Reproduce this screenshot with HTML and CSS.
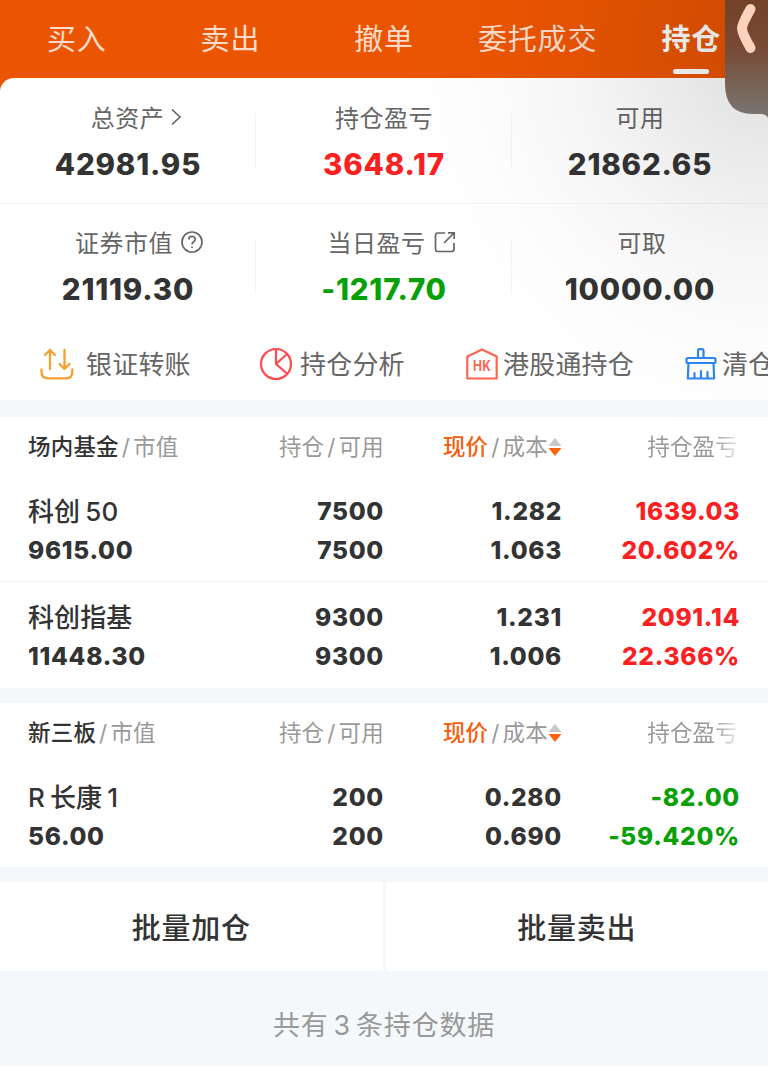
FILE: index.html
```
<!DOCTYPE html>
<html lang="zh-CN">
<head>
    <meta charset="UTF-8">
    <meta name="viewport" content="width=device-width, initial-scale=1.0">
    <title>持仓</title>
    <link rel="stylesheet" href="styles.css">
</head>
<body>
    <div class="page">
        <nav class="tabs">
            <a class="tab">买入</a>
            <a class="tab">卖出</a>
            <a class="tab">撤单</a>
            <a class="tab">委托成交</a>
            <a class="tab active">持仓</a>
        </nav>

        <div class="account">
            <div class="summary">
                <div class="stat">
                    <div class="label label-assets">总资产<svg class="arrow" width="12" height="18" viewBox="0 0 12 18"><path d="M2 1.500 L10 9 L2 16.500"/></svg></div>
                    <div class="value">42981.95</div>
                </div>
                <div class="stat">
                    <div class="label">持仓盈亏</div>
                    <div class="value up">3648.17</div>
                </div>
                <div class="stat">
                    <div class="label">可用</div>
                    <div class="value">21862.65</div>
                </div>
            </div>
            <div class="summary">
                <div class="stat">
                    <div class="label label-market">证券市值<svg width="22" height="22" viewBox="0 0 22 22"><circle cx="11" cy="11" r="10"/><path d="M7.800 8.600 C7.800 4.400 14.300 4.400 14.300 8.300 C14.300 10.800 11 10.800 11 13.400"/><path d="M11 15.400 V17"/></svg></div>
                    <div class="value">21119.30</div>
                </div>
                <div class="stat">
                    <div class="label label-today">当日盈亏<svg width="22" height="22" viewBox="0 0 22 22"><path d="M11 2 H4 Q1.500 2 1.500 4.500 V18 Q1.500 20.500 4 20.500 H17.500 Q20 20.500 20 18 V12"/><path d="M10 12 L20 2 M14 1.800 H20.200 V8"/></svg></div>
                    <div class="value down">-1217.70</div>
                </div>
                <div class="stat">
                    <div class="label label-cash">可取</div>
                    <div class="value">10000.00</div>
                </div>
            </div>
            <div class="actions">
                <a class="action transfer">
                    <svg width="34" height="34" viewBox="0 0 34 34" fill="none" stroke="#f5a032" stroke-width="2.300" stroke-linecap="round" stroke-linejoin="round"><path d="M10 22 V3 M5 8 L10 3 L15 8"/><path d="M24.500 3 V22 M19.500 17 L24.500 22 L29.500 17"/><path d="M1.500 22.500 V25 Q1.500 31.300 8 31.300 H26 Q32.300 31.300 32.300 25 V22.500"/></svg>
                    <span>银证转账</span>
                </a>
                <a class="action">
                    <svg width="32" height="34" viewBox="0 0 32 34" fill="none" stroke="#ff4b50" stroke-width="2.200"><circle cx="16" cy="17" r="15"/><path d="M16 2 V17 L27.500 27 M16 17 L26.500 7.500"/></svg>
                    <span>持仓分析</span>
                </a>
                <a class="action tight">
                    <svg width="32" height="34" viewBox="0 0 32 34" fill="none" stroke="#ff6450" stroke-width="2.200" stroke-linejoin="round"><path d="M1.300 9.500 L16 2.500 L30.700 9.500 V31.500 H1.300 Z"/><text class="hk" x="16" y="24" text-anchor="middle" textLength="18" lengthAdjust="spacingAndGlyphs">HK</text></svg>
                    <span>港股通持仓</span>
                </a>
                <a class="action tight">
                    <svg width="32" height="34" viewBox="0 0 32 34" fill="none" stroke="#2f86f0" stroke-width="2.200" stroke-linejoin="round" stroke-linecap="round"><path d="M13 11 V4 Q13 2.200 14.500 2.200 H17 Q18.500 2.200 18.500 4 V11"/><rect x="1.500" y="11" width="29" height="5" rx="1.500"/><path d="M3.500 16 L2.800 31.500 H29.200 L28.500 16"/><path d="M9.500 31 V26 M16 31 V24 M22.500 31 V25"/></svg>
                    <span>清仓</span>
                </a>
            </div>
        </div>

        <section class="group">
            <div class="row head">
                <div><b>场内基金</b><i>/</i>市值</div>
                <div>持仓<i>/</i>可用</div>
                <div class="sort"><em>现价</em><i>/</i>成本<svg width="14" height="20" viewBox="0 0 14 20"><path fill="#c8c8c8" d="M7 1 L13.500 9 H0.500 Z"/><path fill="#ff640f" d="M7 19 L13.500 11 H0.500 Z"/></svg></div>
                <div class="fade">持仓盈亏</div>
            </div>
            <div class="row holding">
                <div><span class="name">科创<span class="latin">50</span></span>9615.00</div>
                <div>7500<br>7500</div>
                <div>1.282<br>1.063</div>
                <div class="up">1639.03<br>20.602%</div>
            </div>
            <div class="row holding">
                <div><span class="name">科创指基</span>11448.30</div>
                <div>9300<br>9300</div>
                <div>1.231<br>1.006</div>
                <div class="up">2091.14<br>22.366%</div>
            </div>
        </section>

        <section class="group">
            <div class="row head">
                <div><b>新三板</b><i>/</i>市值</div>
                <div>持仓<i>/</i>可用</div>
                <div class="sort"><em>现价</em><i>/</i>成本<svg width="14" height="20" viewBox="0 0 14 20"><path fill="#c8c8c8" d="M7 1 L13.500 9 H0.500 Z"/><path fill="#ff640f" d="M7 19 L13.500 11 H0.500 Z"/></svg></div>
                <div class="fade">持仓盈亏</div>
            </div>
            <div class="row holding">
                <div><span class="name">R<span class="latin">长康</span><span class="latin">1</span></span>56.00</div>
                <div>200<br>200</div>
                <div>0.280<br>0.690</div>
                <div class="down">-82.00<br>-59.420%</div>
            </div>
        </section>

        <div class="batch">
            <button>批量加仓</button>
            <button>批量卖出</button>
        </div>
        <p class="total">共有<span>3</span>条持仓数据</p>

        <!-- floating side handle and the shade around it -->
        <div class="shade"></div>
        <div class="handle">
            <svg width="43" height="120" viewBox="0 0 43 120">
                <defs>
                    <linearGradient id="handle-bg" x1="0" y1="0" x2="0" y2="1">
                        <stop offset="0" stop-color="#734229"/>
                        <stop offset="0.400" stop-color="#784a34"/>
                        <stop offset="0.800" stop-color="#78695f"/>
                        <stop offset="1" stop-color="#787573"/>
                    </linearGradient>
                </defs>
                <path fill="url(#handle-bg)" d="M0 0 H43 V118 Q41 114 36 114 H28 Q0 114 0 84 Z"/>
                <path fill="none" stroke="#ffd2be" stroke-width="10" stroke-linecap="round" stroke-linejoin="round" d="M25.500 9 Q17 24 17 28.500 Q17 33 25.500 48"/>
            </svg>
        </div>
    </div>
</body>
</html>
```
FILE: styles.css
```
* {
    box-sizing: border-box;
}
body {
    margin: 0;
    background: #fff;
    color: #333;
    font-family: Inter, "Noto Sans CJK SC", sans-serif;
}
.page {
    position: relative;
    width: 768px;
    height: 1066px;
    overflow: hidden;
    background: #f4f8fa;
}

/* tabs */
.tabs {
    display: grid;
    grid-template-columns: repeat(5, 1fr);
    height: 92px;
    background: #eb5502;
}
.tab {
    position: relative;
    height: 78px;
    line-height: 80px;
    text-align: center;
    font-size: 29px;
    letter-spacing: 0.8px;
    color: #ffdccb;
}
.tab.active {
    color: #fff;
    font-weight: bold;
}
.tab.active::after {
    content: "";
    position: absolute;
    left: 59px;
    bottom: 4px;
    width: 36px;
    height: 5px;
    border-radius: 3px;
    background: #fff;
}

/* account */
.account {
    position: relative;
    height: 322px;
    margin-top: -14px;
    border-radius: 14px 0 0 0;
    background: #fff;
}
.summary {
    display: grid;
    grid-template-columns: repeat(3, 1fr);
    height: 125px;
    padding-top: 25px;
}
.summary + .summary {
    padding-top: 24px;
    border-top: 1px solid #f3f3f3;
}
.stat {
    height: 80px;
    text-align: center;
    background: linear-gradient(#f5f5f5, #f5f5f5) no-repeat right 10px / 1px 55px;
}
.stat:last-child {
    background: none;
}
.label {
    display: flex;
    align-items: center;
    justify-content: center;
    height: 26px;
    font-size: 24px;
    letter-spacing: 0.5px;
    color: #666;
}
.label svg {
    margin-top: 2px;
    margin-left: 8px;
    fill: none;
    stroke: #666;
    stroke-width: 1.7;
}
.label .arrow {
    margin-left: 6px;
}
.label-assets {
    padding-left: 17px;
}
.label-market {
    padding-left: 22px;
}
.label-today {
    padding-left: 15px;
}
.label-cash {
    padding-left: 4px;
}
.value {
    margin-top: 17px;
    line-height: 36px;
    font-size: 29.5px;
    font-weight: 800;
    letter-spacing: 0.8px;
}
.up {
    color: #fb2022;
}
.down {
    color: #07a007;
}
.actions {
    display: grid;
    grid-template-columns: 220px 206px 219px 140px;
    height: 72px;
    padding-left: 40px;
    overflow: hidden;
}
.action {
    display: flex;
    align-items: center;
    gap: 8px;
    font-size: 26px;
    letter-spacing: 0.2px;
    color: #666;
    white-space: nowrap;
}
.action span {
    margin-top: -3px;
}
.action.transfer {
    gap: 12px;
}
.action.tight {
    gap: 5px;
}
.hk {
    font: bold 14px Inter, sans-serif;
    fill: #ff6450;
    stroke: none;
}

/* holdings */
.group {
    margin-top: 17px;
    background: #fff;
}
.group + .group {
    margin-top: 15px;
}
.row {
    display: grid;
    grid-template-columns: repeat(4, 178px);
    padding: 0 28px;
    text-align: right;
}
.row > :first-child {
    text-align: left;
}
.head {
    height: 57px;
    line-height: 60px;
    font-size: 22.5px;
    letter-spacing: 0.2px;
    color: #999;
}
.head b {
    font-weight: 500;
    color: #333;
}
.head em {
    font-style: normal;
    font-weight: 500;
    color: #f4600c;
}
.head i {
    margin: 0 3px;
    font-style: normal;
}
.sort {
    display: flex;
    align-items: center;
    justify-content: flex-end;
}
.fade {
    padding-right: 2px;
    -webkit-mask-image: linear-gradient(to right, #000 152px, transparent 182px);
    mask-image: linear-gradient(to right, #000 152px, transparent 182px);
}
.holding {
    height: 107px;
    padding-top: 17px;
    line-height: 39px;
    font-size: 24.5px;
    font-weight: 800;
    letter-spacing: 0.7px;
}
.holding + .holding {
    padding-top: 16px;
    border-top: 1px solid #f3f3f3;
}
.head + .holding {
    padding-top: 18px;
    border-top: none;
}
.name {
    display: block;
    height: 39px;
    font-size: 26px;
    font-weight: 500;
    letter-spacing: 0.1px;
}
.latin {
    margin-left: 5px;
}

/* footer */
.batch {
    display: grid;
    grid-template-columns: 1fr 1fr;
    gap: 3px;
    height: 89px;
    margin-top: 15px;
}
.batch button {
    padding: 0 0 2px;
    border: none;
    background: #fff;
    color: #333;
    font-family: inherit;
    font-size: 29px;
    font-weight: 500;
    letter-spacing: 0.7px;
}
.total {
    margin: 0;
    line-height: 110px;
    text-align: center;
    font-size: 27px;
    letter-spacing: 0.8px;
    color: #999;
}
.total span {
    margin: 0 5px;
}

.shade {
    position: absolute;
    top: 0;
    right: 0;
    width: 400px;
    height: 480px;
    background: radial-gradient(ellipse 380px 400px at 100% 10%, rgba(0, 0, 0, 0.14), rgba(0, 0, 0, 0.09) 22%, rgba(0, 0, 0, 0.04) 50%, rgba(0, 0, 0, 0.01) 75%, rgba(0, 0, 0, 0));
    pointer-events: none;
}
.handle {
    position: absolute;
    top: 0;
    right: 0;
    width: 43px;
    height: 120px;
}
```
